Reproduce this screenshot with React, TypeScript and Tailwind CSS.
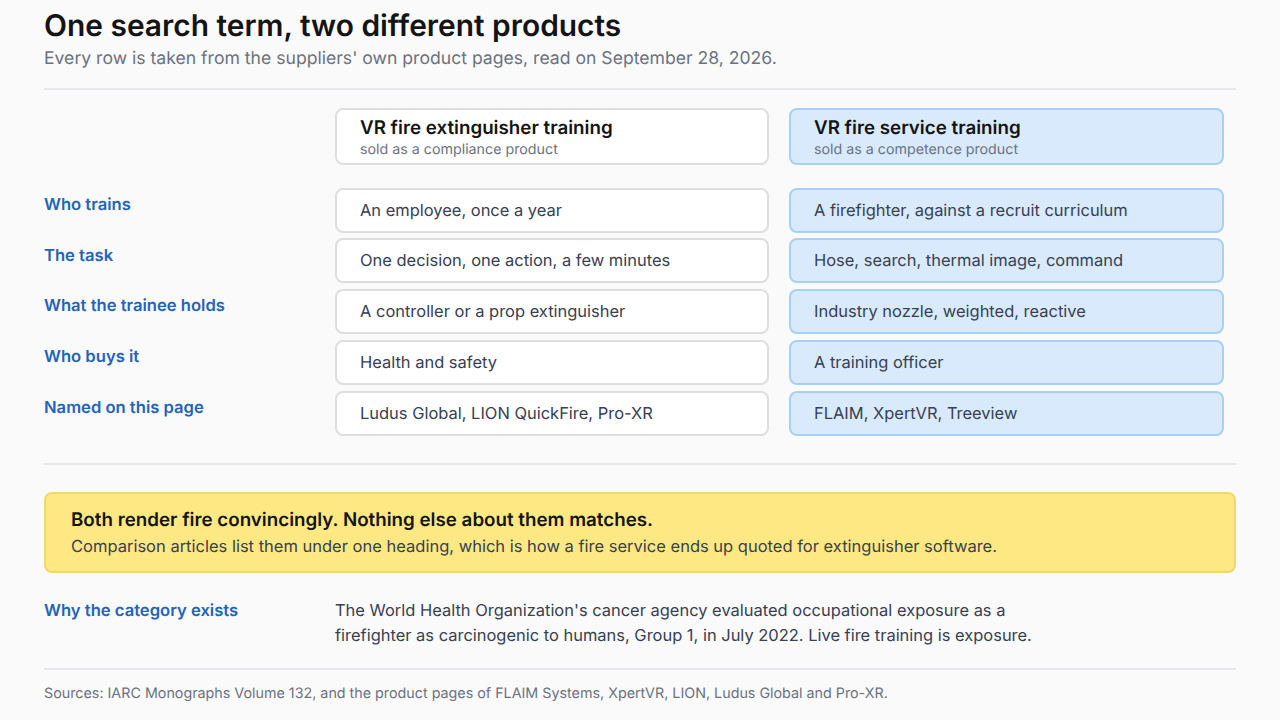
const rows = [
  ["Who trains", "An employee, once a year", "A firefighter, against a recruit curriculum"],
  ["The task", "One decision, one action, a few minutes", "Hose, search, thermal image, command"],
  ["What the trainee holds", "A controller or a prop extinguisher", "Industry nozzle, weighted, reactive"],
  ["Who buys it", "Health and safety", "A training officer"],
  ["Named on this page", "Ludus Global, LION QuickFire, Pro-XR", "FLAIM, XpertVR, Treeview"],
];

export default function App() {
  return (
    <div className="w-[1280px] h-[720px] overflow-hidden bg-[#fafafa] px-[44px] pt-[8px] font-['Inter',sans-serif] [text-rendering:geometricPrecision]">
      <h1 className="text-[29.9px] leading-[36px] font-semibold text-[#141414]">One search term, two different products</h1>
      <p className="mt-[2.5px] text-[17.6px] leading-[24px] text-[#6b7280]">Every row is taken from the suppliers' own product pages, read on September 28, 2026.</p>
      <div className="mt-[17.5px] h-[2px] bg-[#e5e7eb]" />
      <div className="mt-[18px] pr-[12px] grid grid-cols-[271px_434px_435px] gap-x-[20px]">
        <div />
        <div className="h-[56.5px] rounded-[8px] border-2 border-[#dedede] bg-white pl-[23px] pt-[6px]">
          <div className="text-[18.75px] leading-[24px] font-semibold text-[#141414]">VR fire extinguisher training</div>
          <div className="mt-[0.6px] text-[14.25px] leading-[18px] text-[#6b7280]">sold as a compliance product</div>
        </div>
        <div className="h-[56.5px] rounded-[8px] border-2 border-[#a6d1f5] bg-[#d9eafd] pl-[23px] pt-[6px]">
          <div className="text-[18.75px] leading-[24px] font-semibold text-[#141414]">VR fire service training</div>
          <div className="mt-[0.6px] text-[14.25px] leading-[18px] text-[#6b7280]">sold as a competence product</div>
        </div>
      </div>
      <div className="mt-[23px] pr-[12px] grid grid-cols-[271px_434px_435px] gap-x-[20px] gap-y-[5.75px] auto-rows-[45px]">
        {rows.map(([label, a, b]) => (
          <div key={label} className="contents">
            <div className="pt-[5.4px] text-[16.6px] leading-[24px] font-semibold text-[#2563b8]">{label}</div>
            <div className="flex items-center rounded-[8px] border-2 border-[#dedede] bg-white pl-[23px] text-[16.47px] text-[#374151]">{a}</div>
            <div className="flex items-center rounded-[8px] border-2 border-[#a6d1f5] bg-[#d9eafd] pl-[23px] text-[16.47px] text-[#374151]">{b}</div>
          </div>
        ))}
      </div>
      <div className="mt-[27px] h-[2px] bg-[#e5e7eb]" />
      <div className="mt-[27px] h-[81px] rounded-[8px] border-2 border-[#f0d86a] bg-[#fee884] pl-[25px] pt-[14.5px]">
        <div className="text-[18.75px] leading-[24px] font-semibold text-[#141414]">Both render fire convincingly. Nothing else about them matches.</div>
        <div className="mt-[2px] text-[16.5px] leading-[24px] text-[#374151]">Comparison articles list them under one heading, which is how a fire service ends up quoted for extinguisher software.</div>
      </div>
      <div className="mt-[25px] grid grid-cols-[291px_1fr]">
        <div className="pt-[1.2px] text-[16.6px] leading-[25px] font-semibold text-[#2563b8]">Why the category exists</div>
        <p className="text-[16.47px] leading-[25px] text-[#374151]">The World Health Organization's cancer agency evaluated occupational exposure as a<br />firefighter as carcinogenic to humans, Group 1, in July 2022. Live fire training is exposure.</p>
      </div>
      <div className="mt-[20.2px] h-[2px] bg-[#e5e7eb]" />
      <p className="mt-[14.6px] text-[14.3px] leading-[20px] text-[#6b7280]">Sources: IARC Monographs Volume 132, and the product pages of FLAIM Systems, XpertVR, LION, Ludus Global and Pro-XR.</p>
    </div>
  );
}
